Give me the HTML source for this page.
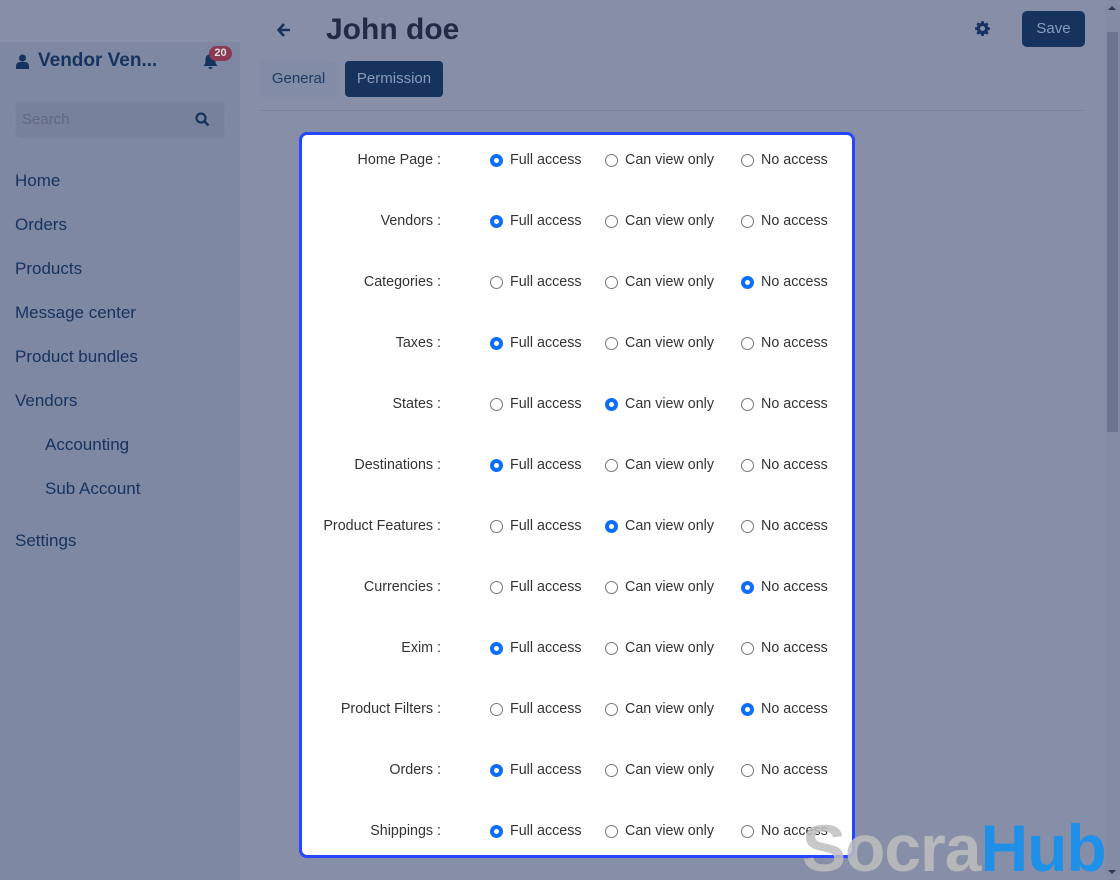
<!DOCTYPE html>
<html><head><style>
*{box-sizing:border-box;margin:0;padding:0}
html,body{width:1120px;height:880px;overflow:hidden}
body{background:#878fa8;font-family:"Liberation Sans",sans-serif;position:relative}
.side{position:absolute;left:0;top:42px;width:240px;height:838px;background:#7f88a3}
.nav{position:absolute;color:#16325e;font-size:17px}
.card{position:absolute;left:299px;top:132px;width:556px;height:726px;background:#fff;border:3px solid #2645ff;border-radius:8px}
.row{position:absolute;left:0;width:550px;height:20px;font-size:14.3px;color:#333}
.row .l{position:absolute;right:411px;top:0;white-space:nowrap}
.r{position:absolute;top:2px;width:13px;height:13px;border:1px solid #777;border-radius:50%;background:#fff}
.r.on{border:none;background:#0d6efd}
.r.on::after{content:"";position:absolute;left:4px;top:4px;width:5px;height:5px;border-radius:50%;background:#fff}
.t{position:absolute;top:0;white-space:nowrap}
</style></head><body>
<div class="side"></div>
<svg style="position:absolute;left:16px;top:54px" width="13" height="15" viewBox="0 0 13 15"><circle cx="6.5" cy="4" r="3.5" fill="#16325e"/><path d="M0 15v-3c0-2.5 2-4 4-4h5c2 0 4 1.5 4 4v3z" fill="#16325e"/></svg>
<div style="position:absolute;left:38px;top:50px;font-size:19px;font-weight:bold;color:#16325e">Vendor Ven...</div>
<svg style="position:absolute;left:203px;top:53px" width="15" height="16" viewBox="0 0 15 16"><path d="M7.5 0c1 0 1.5.8 1.5 1.5C11.5 2 12.5 4 12.5 7v3l2 3H.5l2-3V7c0-3 1-5 3.5-5.5C6 .8 6.5 0 7.5 0zM5.5 14h4a2 2 0 0 1-4 0z" fill="#16325e"/></svg>
<div style="position:absolute;left:209px;top:46px;width:23px;height:15px;border-radius:8px;background:#8a3a55;color:#ddd;font-size:11px;font-weight:bold;text-align:center;line-height:15px">20</div>
<div style="position:absolute;left:15px;top:102px;width:210px;height:36px;border-radius:5px;background:#78819c;border:1px solid #7a84a0"></div>
<div style="position:absolute;left:22px;top:111px;font-size:15px;color:#5f6883">Search</div>
<svg style="position:absolute;left:195px;top:112px" width="15" height="15" viewBox="0 0 15 15"><circle cx="6" cy="6" r="4.5" stroke="#16325e" stroke-width="2.2" fill="none"/><path d="M9.5 9.5L13.5 13.5" stroke="#16325e" stroke-width="2.4"/></svg>
<div class="nav" style="left:15px;top:171px">Home</div>
<div class="nav" style="left:15px;top:215px">Orders</div>
<div class="nav" style="left:15px;top:259px">Products</div>
<div class="nav" style="left:15px;top:303px">Message center</div>
<div class="nav" style="left:15px;top:347px">Product bundles</div>
<div class="nav" style="left:15px;top:391px">Vendors</div>
<div class="nav" style="left:45px;top:435px">Accounting</div>
<div class="nav" style="left:45px;top:479px">Sub Account</div>
<div class="nav" style="left:15px;top:531px">Settings</div>

<svg style="position:absolute;left:277px;top:23px" width="14" height="14" viewBox="0 0 14 14"><path d="M7 1L1.5 7 7 13M2 7h11" stroke="#16325e" stroke-width="2.6" fill="none"/></svg>
<div style="position:absolute;left:326px;top:13px;font-size:30px;font-weight:bold;color:#232a45">John doe</div>
<svg style="position:absolute;left:975px;top:21px" width="15" height="15" viewBox="0 0 16 16"><path fill="#16325e" d="M8 0l1.3.2.3 2 1.4.6 1.7-1.2 1.8 1.8-1.2 1.7.6 1.4 2 .3v2.6l-2 .3-.6 1.4 1.2 1.7-1.8 1.8-1.7-1.2-1.4.6-.3 2H6.7l-.3-2-1.4-.6-1.7 1.2-1.8-1.8 1.2-1.7-.6-1.4-2-.3V6.7l2-.3.6-1.4-1.200-1.7 1.8-1.8 1.7 1.2 1.4-.6.3-2zM8 5.3a2.7 2.7 0 1 0 0 5.4 2.7 2.7 0 0 0 0-5.4z"/></svg>
<div style="position:absolute;left:1022px;top:11px;width:63px;height:36px;border-radius:5px;background:#15335d;color:#8c9bb8;font-size:15px;text-align:center;line-height:36px">Save</div>
<div style="position:absolute;left:260px;top:61px;width:77px;height:36px;border-radius:4px;background:#838ca6;color:#1e3a66;font-size:15px;text-align:center;line-height:36px">General</div>
<div style="position:absolute;left:345px;top:61px;width:98px;height:36px;border-radius:4px;background:#15335d;color:#8c9bb8;font-size:15px;text-align:center;line-height:36px">Permission</div>
<div style="position:absolute;left:260px;top:110px;width:825px;height:1px;background:#7a83a0"></div>
<div style="position:absolute;left:1105px;top:0;width:15px;height:880px;background:#838ba5"></div>
<div style="position:absolute;left:1107px;top:32px;width:11px;height:400px;background:#6b7390"></div>
<div style="position:absolute;left:1108px;top:6px;width:0;height:0;border-left:4px solid transparent;border-right:4px solid transparent;border-bottom:4px solid #2e3550"></div>
<div style="position:absolute;left:1108px;top:870px;width:0;height:0;border-left:4px solid transparent;border-right:4px solid transparent;border-top:4px solid #2e3550"></div>

<div class="card">
<div id="rows"></div>
</div>
<div style="position:absolute;left:802px;top:808px;height:72px;overflow:hidden;font-size:66px;font-weight:bold;letter-spacing:-1px;line-height:80px;white-space:nowrap"><span style="color:rgba(190,190,190,.85)">Socra</span><span style="color:#1e90e8">Hub</span></div>
<script>
var d=[["Home Page",0],["Vendors",0],["Categories",2],["Taxes",0],["States",1],["Destinations",0],["Product Features",1],["Currencies",2],["Exim",0],["Product Filters",2],["Orders",0],["Shippings",0]];
var h="";d.forEach(function(r,i){var y=17+i*61;h+='<div class="row" style="top:'+y+'px"><span class="l">'+r[0]+' :</span>';
[[188,"Full access"],[303,"Can view only"],[439,"No access"]].forEach(function(o,j){h+='<span class="r'+(r[1]==j?' on':'')+'" style="left:'+o[0]+'px"></span><span class="t" style="left:'+(o[0]+20)+'px">'+o[1]+'</span>';});h+='</div>';});
document.getElementById("rows").innerHTML=h;
</script>
</body></html>
